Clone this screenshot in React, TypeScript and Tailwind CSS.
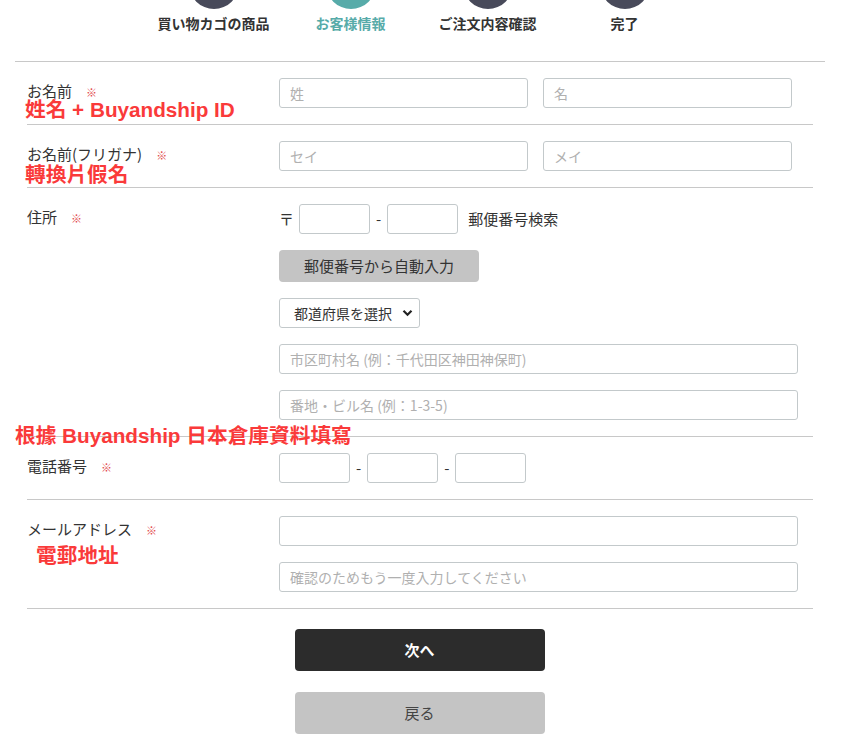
import React from "react";

const jp = { fontFamily: '"Noto Sans CJK JP", "Noto Sans", sans-serif' };
const tc = { fontFamily: '"Liberation Sans", "Noto Sans CJK TC", sans-serif' };

function Req() {
  return <span className="ml-[14px] text-[11px] text-[#e2474b]">※</span>;
}

function Input({ w, ph }: { w: string; ph?: string }) {
  return (
    <div
      className={`${w} h-[30px] shrink-0 rounded-[3px] border border-[#c3c9cb] bg-white px-[10px] flex items-center text-[14px] text-[#b0b0b0]`}
    >
      {ph}
    </div>
  );
}

function Row({ label, children }: { label: React.ReactNode; children: React.ReactNode }) {
  return (
    <div className="flex border-b border-[#c8c8c8] py-4">
      <div className="w-[252px] shrink-0 pt-[4px] text-[15px] leading-[18px] text-[#333]">{label}</div>
      <div className="flex flex-col gap-4">{children}</div>
    </div>
  );
}

const steps = [
  { t: "買い物カゴの商品", active: false },
  { t: "お客様情報", active: true },
  { t: "ご注文内容確認", active: false },
  { t: "完了", active: false },
];

export default function App() {
  return (
    <div className="relative w-[849px] h-[739px] overflow-hidden bg-white" style={jp}>
      {/* steps */}
      <div className="flex pl-[145px]">
        {steps.map((s) => (
          <div key={s.t} className="w-[137px] flex flex-col items-center">
            <div
              className={`mt-[-41px] h-[50px] w-[50px] rounded-full ${s.active ? "bg-[#57aba9]" : "bg-[#484a5a]"}`}
            />
            <div
              className={`mt-[4px] text-[14px] font-bold leading-[20px] ${s.active ? "text-[#57aba9]" : "text-[#333]"}`}
            >
              {s.t}
            </div>
          </div>
        ))}
      </div>

      <div className="mt-[28px] ml-[15px] w-[810px] border-t border-[#c8c8c8]" />

      <div className="ml-[27px] w-[786px]">
        <Row
          label={
            <>
              お名前
              <Req />
            </>
          }
        >
          <div className="flex gap-[15px]">
            <Input w="w-[249px]" ph="姓" />
            <Input w="w-[249px]" ph="名" />
          </div>
        </Row>
        <Row
          label={
            <>
              お名前(フリガナ)
              <Req />
            </>
          }
        >
          <div className="flex gap-[15px]">
            <Input w="w-[249px]" ph="セイ" />
            <Input w="w-[249px]" ph="メイ" />
          </div>
        </Row>
        <Row
          label={
            <>
              住所
              <Req />
            </>
          }
        >
          <div className="flex items-center text-[15px] text-[#333]">
            <span className="mr-[5px]">〒</span>
            <Input w="w-[71px]" />
            <span className="mx-[6px]">-</span>
            <Input w="w-[71px]" />
            <span className="ml-[10px]">郵便番号検索</span>
          </div>
          <div className="w-[200px] h-[32px] rounded-[4px] bg-[#c4c4c4] flex items-center justify-center text-[15px] text-[#333]">
            郵便番号から自動入力
          </div>
          <div className="w-[141px] h-[30px] rounded-[3px] border border-[#c3c9cb] flex items-center pl-[14px] pr-[6px] text-[14px] text-[#333]">
            <span className="flex-1">都道府県を選択</span>
            <svg width="11" height="8" viewBox="0 0 11 8">
              <path d="M1.5 1.8 L5.5 5.8 L9.5 1.8" fill="none" stroke="#222" strokeWidth="2.2" />
            </svg>
          </div>
          <Input w="w-[519px]" ph="市区町村名 (例：千代田区神田神保町)" />
          <Input w="w-[519px]" ph="番地・ビル名 (例：1-3-5)" />
        </Row>
        <Row
          label={
            <>
              電話番号
              <Req />
            </>
          }
        >
          <div className="flex items-center text-[15px] text-[#333]">
            <Input w="w-[71px]" />
            <span className="mx-[6px]">-</span>
            <Input w="w-[71px]" />
            <span className="mx-[6px]">-</span>
            <Input w="w-[71px]" />
          </div>
        </Row>
        <Row
          label={
            <>
              メールアドレス
              <Req />
            </>
          }
        >
          <Input w="w-[519px]" />
          <Input w="w-[519px]" ph="確認のためもう一度入力してください" />
        </Row>
      </div>

      <div className="mt-5 flex flex-col items-center gap-[21px] pr-[10px]">
        <div className="w-[250px] h-[42px] rounded-[4px] bg-[#2c2c2c] flex items-center justify-center text-[15px] font-bold text-white">
          次へ
        </div>
        <div className="w-[250px] h-[42px] rounded-[4px] bg-[#c4c4c4] flex items-center justify-center text-[15px] text-[#444]">
          戻る
        </div>
      </div>

      {/* annotations */}
      <div className="absolute left-[25px] top-[100px] text-[20.7px] font-bold leading-[20px] text-[#fa3a3a]" style={tc}>
        姓名 + Buyandship ID
      </div>
      <div className="absolute left-[25px] top-[165px] text-[20.7px] font-bold leading-[20px] text-[#fa3a3a]" style={tc}>
        轉換片假名
      </div>
      <div className="absolute left-[15px] top-[426px] text-[20.7px] font-bold leading-[20px] text-[#fa3a3a]" style={tc}>
        根據 Buyandship 日本倉庫資料填寫
      </div>
      <div className="absolute left-[36px] top-[546px] text-[20.7px] font-bold leading-[20px] text-[#fa3a3a]" style={tc}>
        電郵地址
      </div>
    </div>
  );
}
